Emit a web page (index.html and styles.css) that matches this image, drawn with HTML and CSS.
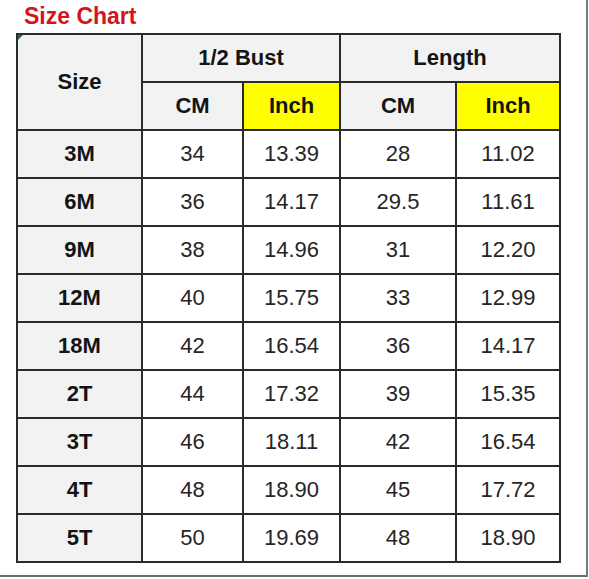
FILE: index.html
```html
<!DOCTYPE html>
<html>
<head>
<meta charset="utf-8">
<link rel="stylesheet" href="styles.css">
</head>
<body>
<div class="frame">
  <div class="title">Size Chart</div>
  <div class="table-wrap">
    <span class="marker"></span>
    <table class="chart">
      <colgroup>
        <col class="c1"><col class="c2"><col class="c3"><col class="c4"><col class="c5">
      </colgroup>
      <tr class="hd">
        <th rowspan="2">Size</th>
        <th colspan="2">1/2 Bust</th>
        <th colspan="2">Length</th>
      </tr>
      <tr class="hd">
        <th>CM</th><th class="yellow">Inch</th><th>CM</th><th class="yellow">Inch</th>
      </tr>
      <tr><th>3M</th><td>34</td><td>13.39</td><td>28</td><td>11.02</td></tr>
      <tr><th>6M</th><td>36</td><td>14.17</td><td>29.5</td><td>11.61</td></tr>
      <tr><th>9M</th><td>38</td><td>14.96</td><td>31</td><td>12.20</td></tr>
      <tr><th>12M</th><td>40</td><td>15.75</td><td>33</td><td>12.99</td></tr>
      <tr><th>18M</th><td>42</td><td>16.54</td><td>36</td><td>14.17</td></tr>
      <tr><th>2T</th><td>44</td><td>17.32</td><td>39</td><td>15.35</td></tr>
      <tr><th>3T</th><td>46</td><td>18.11</td><td>42</td><td>16.54</td></tr>
      <tr><th>4T</th><td>48</td><td>18.90</td><td>45</td><td>17.72</td></tr>
      <tr><th>5T</th><td>50</td><td>19.69</td><td>48</td><td>18.90</td></tr>
    </table>
  </div>
</div>
</body>
</html>
```
FILE: styles.css
```css
html, body {
  margin: 0;
  padding: 0;
  background: #ffffff;
}
.frame {
  width: 586px;
  height: 575px;
  border-right: 2px solid #7a7a7a;
  border-bottom: 2px solid #6e6e6e;
  font-family: "Liberation Sans", Arial, sans-serif;
}
.title {
  padding: 3px 0 0 24px;
  height: 33px;
  box-sizing: border-box;
  font-size: 23px;
  line-height: 26px;
  font-weight: bold;
  color: #d3141d;
}
.table-wrap {
  position: relative;
  margin-left: 16px;
  width: 545px;
}
.marker {
  position: absolute;
  left: 2px;
  top: 2px;
  width: 0;
  height: 0;
  border-top: 5px solid #2f6b2f;
  border-right: 5px solid transparent;
}
.chart {
  border-collapse: collapse;
  table-layout: fixed;
  width: 545px;
}
.c1 { width: 125px; }
.c2 { width: 101px; }
.c3 { width: 97px; }
.c4 { width: 116px; }
.c5 { width: 104px; }
.chart tr {
  height: 48px;
}
.chart th, .chart td {
  border: 2px solid #2b2b2b;
  padding: 0;
  text-align: center;
  vertical-align: middle;
  font-size: 22px;
  line-height: 24px;
}
.chart th {
  background: #f2f2f2;
  font-weight: bold;
  color: #141414;
}
.chart td {
  background: #ffffff;
  font-weight: normal;
  color: #262626;
}
.chart th.yellow {
  background: #ffff00;
}
```
